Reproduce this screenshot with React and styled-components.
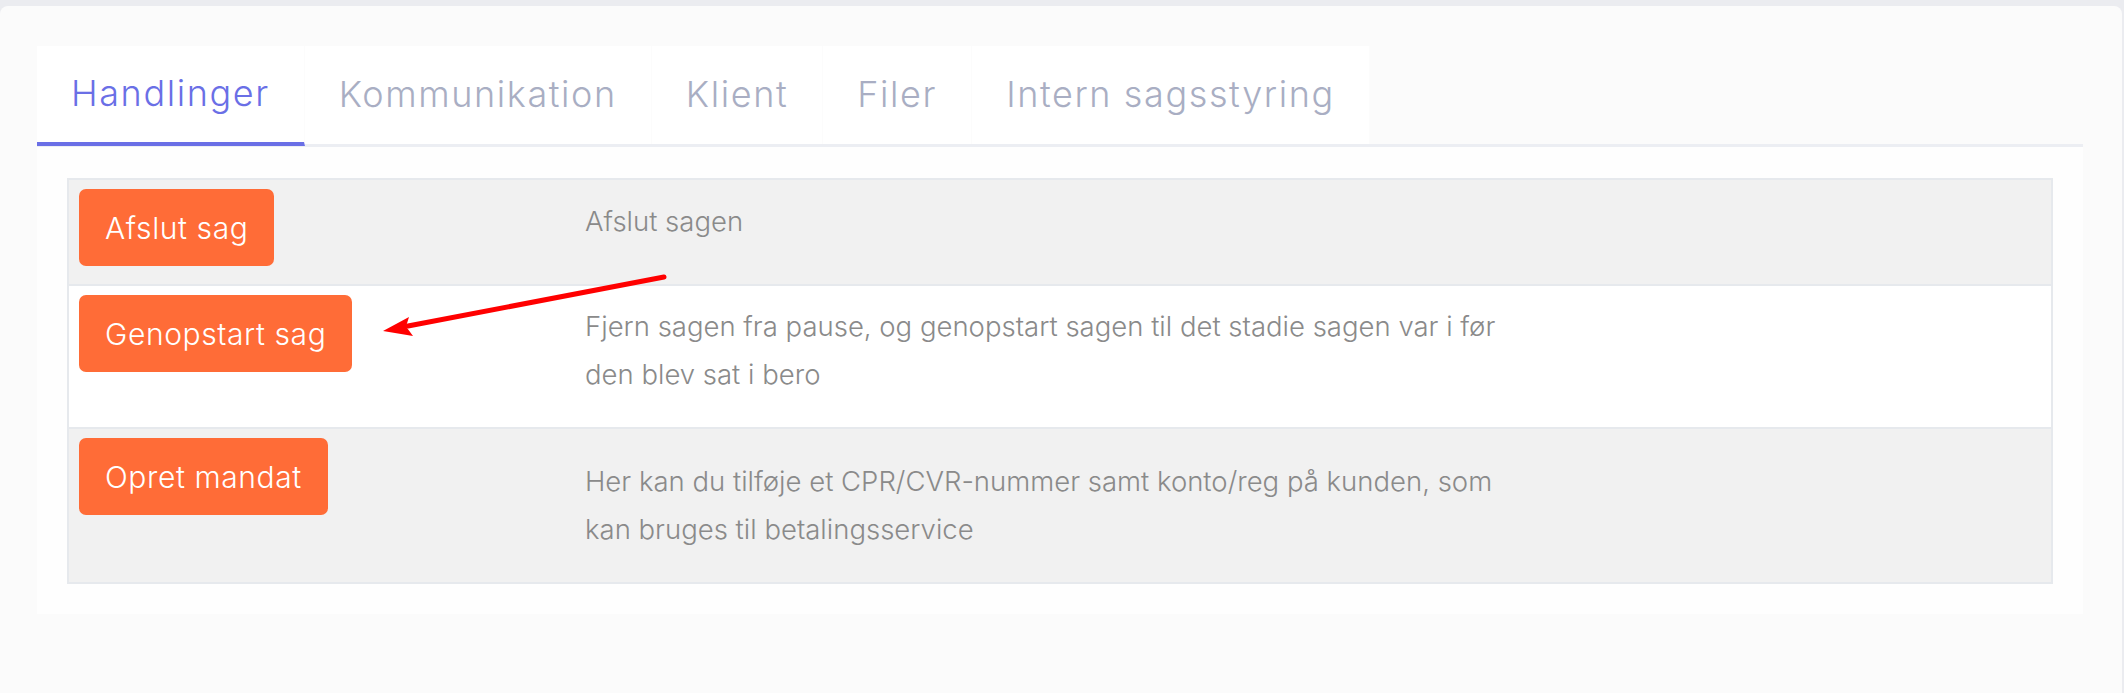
import React, { useState } from "react";
import styled, { createGlobalStyle } from "styled-components";

const GlobalStyle = createGlobalStyle`
  * { box-sizing: border-box; }
  body {
    margin: 0;
    background: #ebecf0;
    font-family: "Inter", "Liberation Sans", sans-serif;
  }
`;

const tabs = ["Handlinger", "Kommunikation", "Klient", "Filer", "Intern sagsstyring"];

// height includes the 2px divider above each row after the first
const actions = [
  { label: "Afslut sag", lines: ["Afslut sagen"], height: 104, offset: 17 },
  {
    label: "Genopstart sag",
    lines: [
      "Fjern sagen fra pause, og genopstart sagen til det stadie sagen var i før",
      "den blev sat i bero",
    ],
    height: 143,
    offset: 16,
  },
  {
    label: "Opret mandat",
    lines: [
      "Her kan du tilføje et CPR/CVR-nummer samt konto/reg på kunden, som",
      "kan bruges til betalingsservice",
    ],
    height: 155,
    offset: 28,
  },
];

const App = () => {
  const [active, setActive] = useState(0);

  return (
    <Page>
      <GlobalStyle />
      <Card>
        <TabBar>
          {tabs.map((t, i) => (
            <Tab key={t} $active={active === i} onClick={() => setActive(i)}>
              {t}
            </Tab>
          ))}
        </TabBar>
        <Body>
          <Table>
            {actions.map(({ label, lines, height, offset }, i) => (
              <Row key={label} $odd={i % 2 === 0} $height={height}>
                <ButtonCell>
                  <ActionButton>{label}</ActionButton>
                </ButtonCell>
                <Description $offset={offset}>
                  {lines.map((l) => (
                    <Line key={l}>{l}</Line>
                  ))}
                </Description>
              </Row>
            ))}
          </Table>
        </Body>
      </Card>
      <Arrow width="2124" height="693" viewBox="0 0 2124 693">
        <line
          x1="664"
          y1="277"
          x2="408"
          y2="326"
          stroke="#ff0000"
          strokeWidth="5"
          strokeLinecap="round"
        />
        <polygon points="383,331 413,336 406,326.5 409,317" fill="#ff0000" />
      </Arrow>
    </Page>
  );
};

export default App;

const Page = styled.div`
  position: relative;
  min-height: 100vh;
  padding-top: 6px;
  overflow: hidden;
`;

const Card = styled.div`
  width: calc(100% - 2px);
  min-height: 720px;
  background: #fbfbfb;
  border-radius: 8px 8px 0 0;
  padding: 40px 39px 0 37px;
`;

const TabBar = styled.div`
  display: flex;
  align-items: flex-start;
  height: 101px;
  box-shadow: inset 0 -3px 0 #eceef3;
`;

const Tab = styled.div`
  display: flex;
  align-items: center;
  height: ${({ $active }) => ($active ? "100px" : "98px")};
  padding: 0 34px 3px;
  background: #ffffff;
  border-right: 1px solid #fcfcfc;
  border-bottom: ${({ $active }) => ($active ? "4px solid #6a6fe6" : "none")};
  color: ${({ $active }) => ($active ? "#6a6fe6" : "#a9aec3")};
  font-size: 36px;
  font-weight: 300;
  letter-spacing: 1.6px;
  line-height: 1;
  white-space: nowrap;
  cursor: pointer;
`;

const Body = styled.div`
  background: #fefefe;
  padding: 31px 30px 30px;
`;

const Table = styled.div`
  border: 2px solid #e6e9ed;
  display: flex;
  flex-direction: column;
`;

const Row = styled.div`
  display: grid;
  grid-template-columns: 516px 1fr;
  min-height: ${({ $height }) => $height}px;
  background: ${({ $odd }) => ($odd ? "#f1f1f1" : "#ffffff")};
  & + & {
    border-top: 2px solid #e6e9ed;
  }
`;

const ButtonCell = styled.div`
  padding: 9px 10px;
`;

const ActionButton = styled.button`
  height: 77px;
  padding: 0 26px;
  border: none;
  border-radius: 7px;
  background: #ff6c37;
  color: #ffffff;
  font-family: "Inter", "Liberation Sans", sans-serif;
  font-size: 30px;
  font-weight: 300;
  letter-spacing: 0.6px;
  cursor: pointer;
`;

const Description = styled.div`
  padding-top: ${({ $offset }) => $offset}px;
  color: #8a8a8a;
  font-size: 27.5px;
  font-weight: 300;
  line-height: 48px;
`;

const Line = styled.div`
  white-space: nowrap;
`;

const Arrow = styled.svg`
  position: absolute;
  top: 0;
  left: 0;
  pointer-events: none;
`;
